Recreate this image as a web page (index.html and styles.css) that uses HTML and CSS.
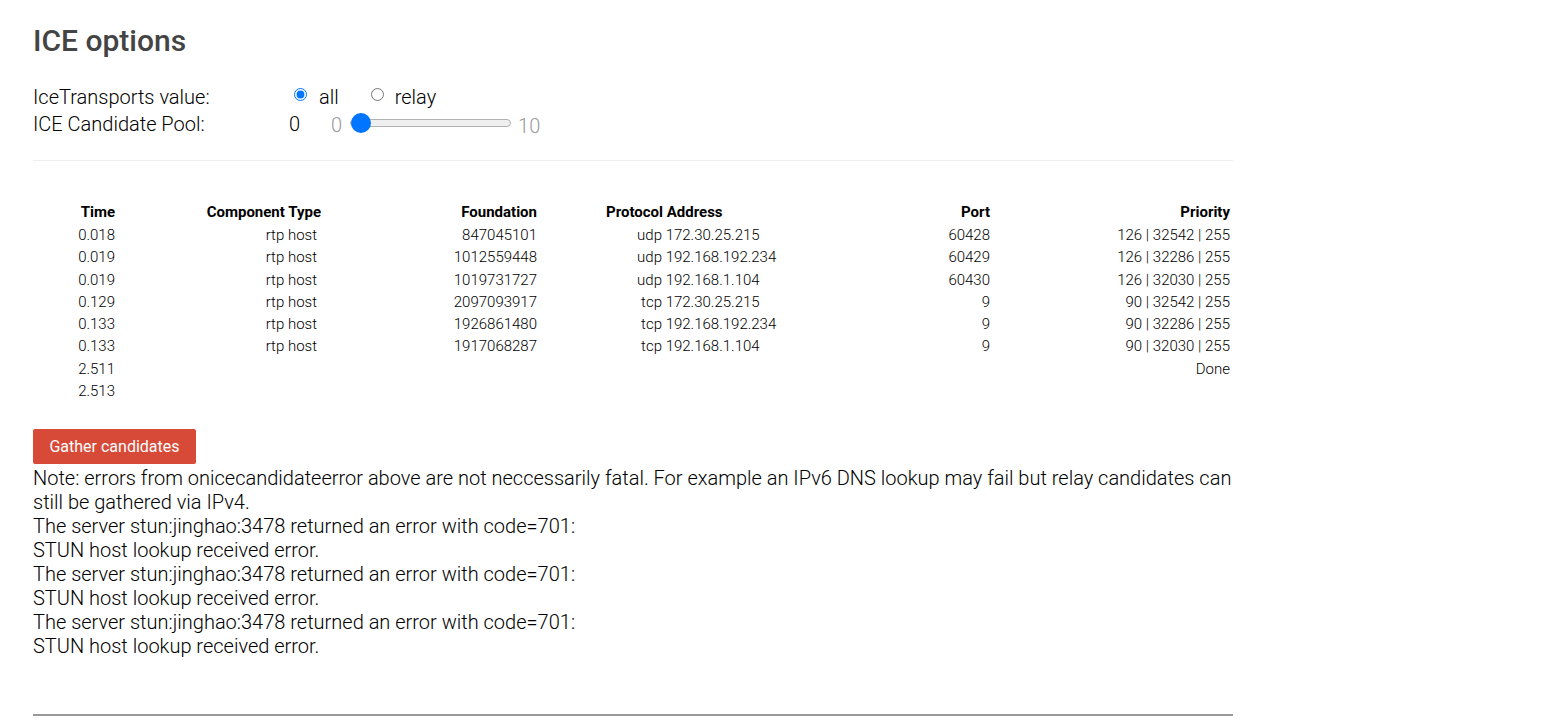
FILE: index.html
```html
<!DOCTYPE html>
<html>
<head>
<meta charset="utf-8">
<title>Trickle ICE</title>
<link rel="stylesheet" href="styles.css">
</head>
<body>
<div class="container">
  <section class="options">
    <h2 class="title">ICE options</h2>
    <div class="opt-row">
      <span class="opt-label">IceTransports value:</span>
      <input class="radio" type="radio" name="transports" id="all" checked><label class="radio-label" for="all">all</label>
      <input class="radio radio-2" type="radio" name="transports" id="relay"><label class="radio-label radio-label-2" for="relay">relay</label>
    </div>
    <div class="opt-row">
      <label class="opt-label" for="pool">ICE Candidate Pool:</label>
      <span class="pool-value">0</span>
      <span class="range-min">0</span>
      <input class="range" id="pool" type="range" min="0" max="10" value="0">
      <span class="range-max">10</span>
    </div>
  </section>
  <hr class="rule">
  <table class="candidates">
    <colgroup>
      <col class="c-time"><col class="c-comp"><col class="c-found"><col class="c-addr"><col class="c-port"><col class="c-prio">
    </colgroup>
    <thead>
      <tr><th class="r">Time</th><th class="r">Component Type</th><th class="r">Foundation</th><th class="l">Protocol Address</th><th class="r">Port</th><th class="r">Priority</th></tr>
    </thead>
    <tbody>
      <tr><td class="r">0.018</td><td class="r comp">rtp host</td><td class="r">847045101</td><td class="l"><span class="proto">udp</span> 172.30.25.215</td><td class="r">60428</td><td class="r">126 | 32542 | 255</td></tr>
      <tr><td class="r">0.019</td><td class="r comp">rtp host</td><td class="r">1012559448</td><td class="l"><span class="proto">udp</span> 192.168.192.234</td><td class="r">60429</td><td class="r">126 | 32286 | 255</td></tr>
      <tr><td class="r">0.019</td><td class="r comp">rtp host</td><td class="r">1019731727</td><td class="l"><span class="proto">udp</span> 192.168.1.104</td><td class="r">60430</td><td class="r">126 | 32030 | 255</td></tr>
      <tr><td class="r">0.129</td><td class="r comp">rtp host</td><td class="r">2097093917</td><td class="l"><span class="proto">tcp</span> 172.30.25.215</td><td class="r">9</td><td class="r">90 | 32542 | 255</td></tr>
      <tr><td class="r">0.133</td><td class="r comp">rtp host</td><td class="r">1926861480</td><td class="l"><span class="proto">tcp</span> 192.168.192.234</td><td class="r">9</td><td class="r">90 | 32286 | 255</td></tr>
      <tr><td class="r">0.133</td><td class="r comp">rtp host</td><td class="r">1917068287</td><td class="l"><span class="proto">tcp</span> 192.168.1.104</td><td class="r">9</td><td class="r">90 | 32030 | 255</td></tr>
      <tr><td class="r">2.511</td><td></td><td></td><td></td><td></td><td class="r">Done</td></tr>
      <tr><td class="r">2.513</td><td></td><td></td><td></td><td></td><td></td></tr>
    </tbody>
  </table>
  <button class="gather">Gather candidates</button>
  <div class="notes">
    <div>Note: errors from onicecandidateerror above are not neccessarily fatal. For example an IPv6 DNS lookup may fail but relay candidates can still be gathered via IPv4.</div>
    <div>The server stun:jinghao:3478 returned an error with code=701:</div>
    <div>STUN host lookup received error.</div>
    <div>The server stun:jinghao:3478 returned an error with code=701:</div>
    <div>STUN host lookup received error.</div>
    <div>The server stun:jinghao:3478 returned an error with code=701:</div>
    <div>STUN host lookup received error.</div>
  </div>
  <hr class="footer-rule">
</div>
</body>
</html>
```

FILE: styles.css
```css
html, body {
  margin: 0;
  padding: 0;
  background: #fff;
}
body {
  font-family: Roboto, "Noto Sans", sans-serif;
  font-weight: 300;
  color: #000;
}
.container {
  width: 1200px;
  padding: 23px 0 0 33px;
}
.title {
  margin: 0;
  font-size: 30px;
  line-height: 36px;
  font-weight: 500;
  color: #444;
}
.opt-row {
  display: flex;
  align-items: center;
  font-size: 20px;
  line-height: 27px;
  height: 27px;
}
.options .opt-row:first-of-type {
  margin-top: 25px;
}
.opt-label {
  width: 256px;
  flex: none;
}
.radio {
  width: 13px;
  height: 13px;
  margin: 0 0 7px 5px;
  flex: none;
}
.radio-2 {
  margin-left: 32px;
}
.radio-label {
  margin-left: 12px;
}
.radio-label-2 {
  margin-left: 11px;
}
.pool-value {
  width: 9px;
}
.range-min {
  color: #999;
  margin-left: 33px;
  margin-top: 2px;
}
.range {
  -webkit-appearance: none;
  appearance: none;
  width: 161px;
  height: 20px;
  margin: 0 0 4px 8px;
  padding: 0;
  background: transparent;
}
.range::-webkit-slider-runnable-track {
  height: 8px;
  box-sizing: border-box;
  background: #efefef;
  border: 1px solid #b2b2b2;
  border-radius: 4px;
}
.range::-webkit-slider-thumb {
  -webkit-appearance: none;
  appearance: none;
  width: 20px;
  height: 20px;
  border-radius: 50%;
  background: #0075ff;
  border: none;
  margin-top: -7px;
}
.range-max {
  color: #999;
  margin-left: 7px;
  margin-top: 4px;
}
.rule {
  margin: 22px 0 0 0;
  border: none;
  border-top: 1px solid #eee;
  height: 0;
}
.candidates {
  margin-top: 41px;
  width: 1200px;
  table-layout: fixed;
  border-collapse: collapse;
  font-size: 15px;
}
.c-time { width: 85px; }
.c-comp { width: 206px; }
.c-found { width: 216px; }
.c-addr { width: 400px; }
.c-port { width: 53px; }
.c-prio { width: 240px; }
.candidates th {
  font-weight: 700;
  line-height: 20px;
  padding: 0 3px 2px 3px;
}
.candidates td {
  line-height: 22.3px;
  padding: 0 3px;
  white-space: nowrap;
}
.candidates .r { text-align: right; }
.candidates .l { text-align: left; }
.candidates th.l { padding-left: 66px; }
.candidates td.l { padding-left: 66px; }
.candidates td.comp { padding-right: 7px; }
.proto {
  display: inline-block;
  width: 56px;
  text-align: right;
}
.gather {
  display: block;
  margin-top: 27px;
  background: #d84a38;
  color: #fff;
  border: none;
  border-radius: 2px;
  font-family: Roboto, "Noto Sans", sans-serif;
  font-weight: 400;
  font-size: 16px;
  line-height: 19px;
  padding: 8px 16px 8px 16px;
  width: 163px;
  height: 35px;
}
.notes {
  font-size: 20px;
  line-height: 24px;
  margin-top: 2px;
}
.footer-rule {
  margin: 56px 0 0 0;
  border: none;
  border-top: 2px solid #999;
  height: 0;
}
```
